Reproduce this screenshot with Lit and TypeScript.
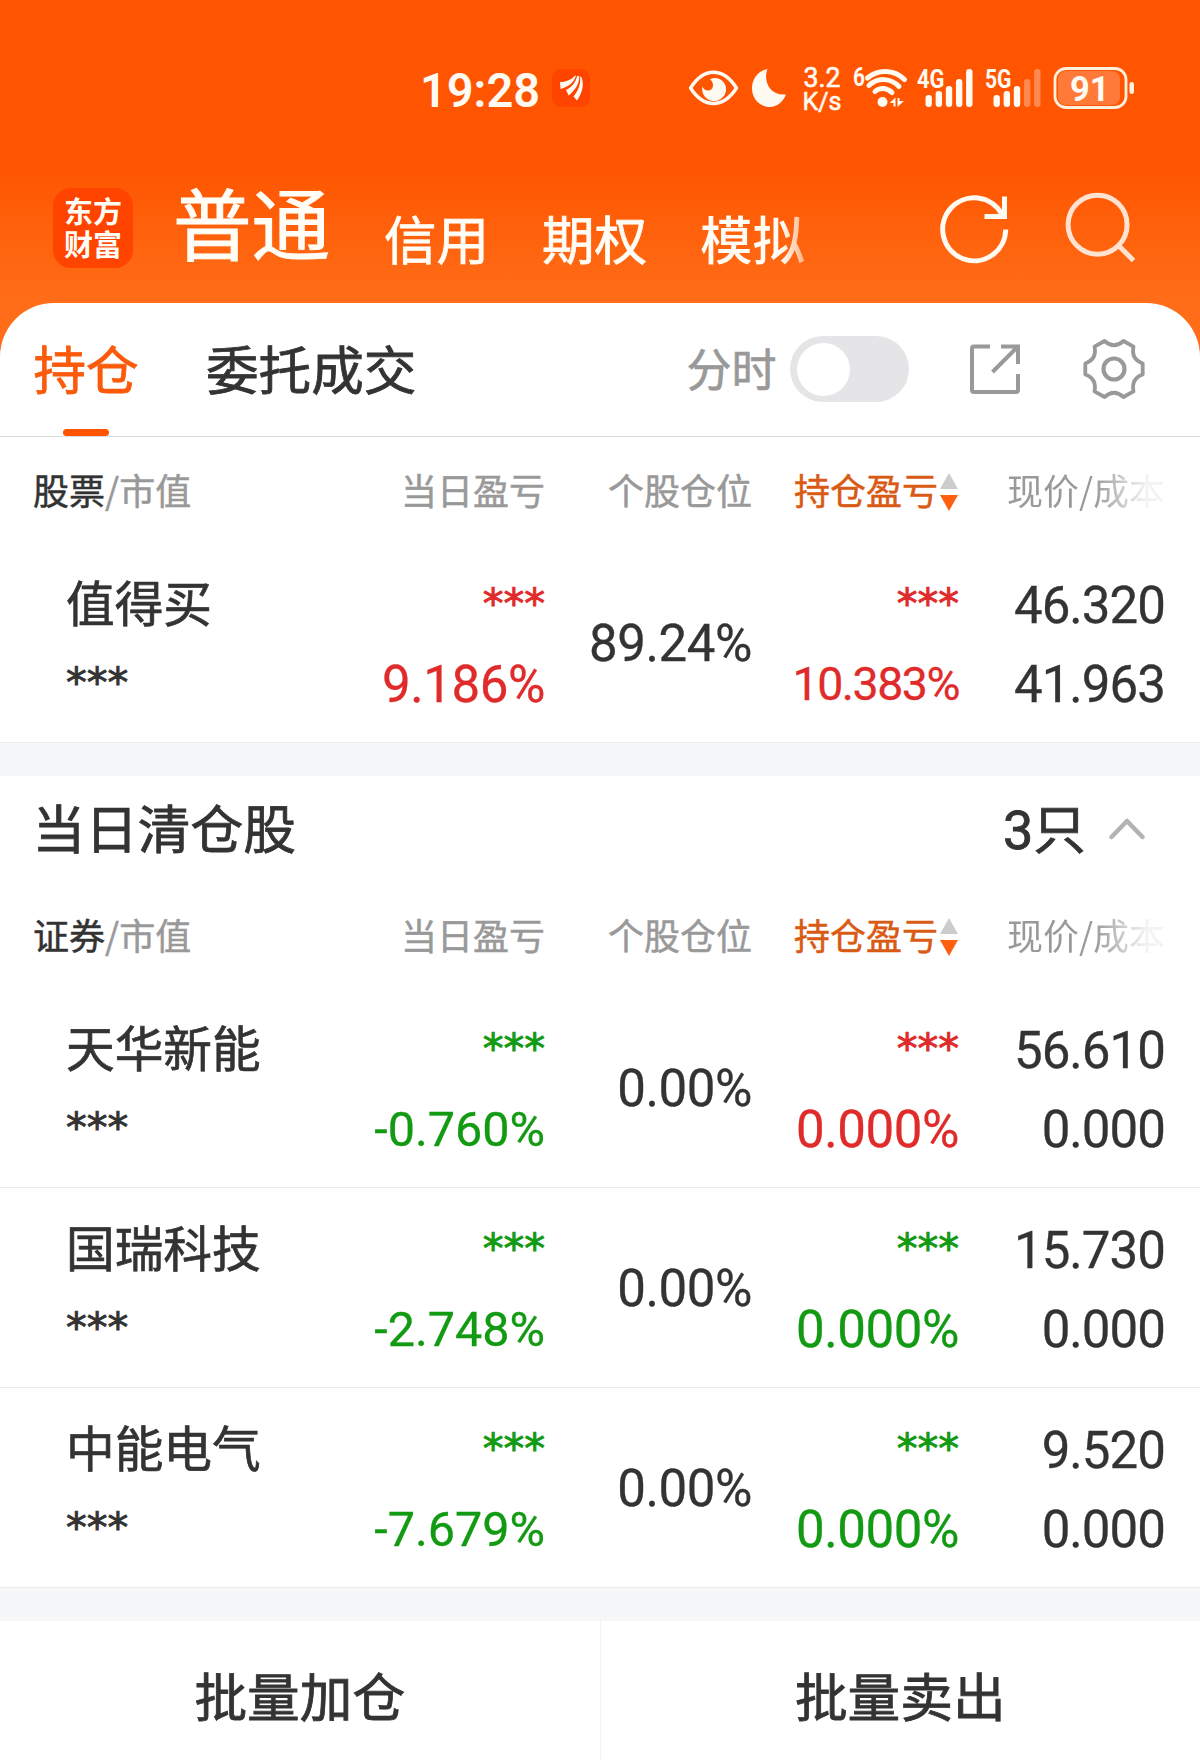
import { LitElement, html, css, svg } from "lit";
import { customElement, property } from "lit/decorators.js";
import { classMap } from "lit/directives/class-map.js";

type Tone = "up" | "down";

interface Holding {
  name: string;
  dayTone: Tone;
  dayPct: string;
  position: string;
  pnlTone: Tone;
  pnlPct: string;
  price: string;
  cost: string;
}

const MASK = "***";

const HELD: Holding[] = [
  { name: "值得买", dayTone: "up", dayPct: "9.186%", position: "89.24%", pnlTone: "up", pnlPct: "10.383%", price: "46.320", cost: "41.963" },
];

const CLEARED: Holding[] = [
  { name: "天华新能", dayTone: "down", dayPct: "-0.760%", position: "0.00%", pnlTone: "up", pnlPct: "0.000%", price: "56.610", cost: "0.000" },
  { name: "国瑞科技", dayTone: "down", dayPct: "-2.748%", position: "0.00%", pnlTone: "down", pnlPct: "0.000%", price: "15.730", cost: "0.000" },
  { name: "中能电气", dayTone: "down", dayPct: "-7.679%", position: "0.00%", pnlTone: "down", pnlPct: "0.000%", price: "9.520", cost: "0.000" },
];

@customElement("status-bar")
class StatusBar extends LitElement {
  static styles = css`
    :host { display: block; height: 160px; color: #fffaf2; font-family: Roboto, sans-serif; }
    svg { display: block; }
    .num { font-family: Roboto, sans-serif; fill: #fffaf2; }
  `;

  private bars(x: number, dim: number) {
    const tops = [95, 91, 86, 79, 69];
    return tops.map(
      (t, i) => svg`<rect x=${x + i * 10.15} y=${t} width="6.4" height=${107 - t} rx="3" fill="#fffaf2" opacity=${i >= 5 - dim ? 0.32 : 1}></rect>`
    );
  }

  render() {
    return html`
      <svg width="1200" height="160" viewBox="0 0 1200 160">
        <text class="num" x="420" y="106.500" font-size="48.500" font-weight="600" textLength="120" lengthAdjust="spacingAndGlyphs">19:28</text>

        <rect x="552" y="69" width="38" height="38" rx="9" fill="#ff4400"></rect>
        <g fill="#fffaf2">
          <path d="M560 82c5 0 11-2 14.500-6l1.500-.5c-2 7-7 11-15.500 13.500z"></path>
          <path d="M566 90c6-3 10-8 11-14l2.200 0c.3 8-4 14-10.500 19.500z"></path>
          <path d="M573.500 96.500c5-6 7.500-13 6.500-20l1.500.8c3 8 .5 16-4.500 23.200z"></path>
        </g>

        <path d="M690.500 88C697 78 705 72.300 713.500 72.300S730 78 736.500 88C730 98 722 103.500 713.500 103.500S697 98 690.500 88z"
          fill="none" stroke="#fffaf2" stroke-width="3.400" stroke-linejoin="round"></path>
        <path d="M710 79.200A12 12 0 0 1 723.500 82A11.500 11.500 0 0 1 722 98C716 104 704 101 702.300 91C702 89.500 702 88 702.400 86.500C704 91 709.500 92 712 88.500C714 85.500 713 81.500 710 79.200z" fill="#fffaf2"></path>
        <path d="M767.500 69C763 80 769 96 786 94.500C783 102 777 107 770 107C759.500 107 752 98.500 752 88.500C752 78 758.500 70.500 767.500 69z" fill="#fffaf2"></path>

        <text class="num" x="803.500" y="86.500" font-size="27" textLength="37" lengthAdjust="spacingAndGlyphs" stroke="#fffaf2" stroke-width=".6">3.2</text>
        <text class="num" x="802.500" y="109.500" font-size="26.500" textLength="39" lengthAdjust="spacingAndGlyphs" stroke="#fffaf2" stroke-width=".6">K/s</text>
        <text class="num" x="853" y="86" font-size="25" font-weight="700" textLength="12" lengthAdjust="spacingAndGlyphs">6</text>

        <g fill="none" stroke="#fffaf2" stroke-width="5" stroke-linecap="round">
          <path d="M867.500 78C878 69 894 69 904.500 79.500"></path>
          <path d="M869 85.500C878 77 891 78 899 86.500"></path>
          <path d="M875 91.500C880 87 887 87.500 892 92.500"></path>
        </g>
        <circle cx="882.500" cy="102" r="5" fill="#fffaf2"></circle>
        <path d="M889.500 103l6-5.500v9h-2v-3.500zM897.500 98h2v3h4.500l-6.500 6z" fill="#fffaf2"></path>

        <text class="num" x="917" y="87.500" font-size="25.500" font-weight="700" textLength="27.500" lengthAdjust="spacingAndGlyphs">4G</text>
        ${this.bars(925.5, 0)}
        <text class="num" x="985" y="87.500" font-size="25.500" font-weight="700" textLength="26.500" lengthAdjust="spacingAndGlyphs">5G</text>
        ${this.bars(993.5, 2)}

        <rect x="1058" y="71" width="62" height="34" rx="8" fill="#ff7a38"></rect>
        <rect x="1055" y="68.500" width="71" height="39" rx="11" fill="none" stroke="#fff0de" stroke-width="2.800"></rect>
        <rect x="1129.500" y="82" width="4.500" height="12" rx="2.200" fill="#fff0de"></rect>
        <text class="num" x="1070" y="101" font-size="35" font-weight="700" textLength="39.500" lengthAdjust="spacingAndGlyphs">91</text>
      </svg>
    `;
  }
}

@customElement("account-nav")
class AccountNav extends LitElement {
  static styles = css`
    :host { display: block; height: 143px; font-family: "Noto Sans CJK SC", sans-serif; color: #fffdf6; }
    .nav { display: flex; align-items: flex-start; padding: 28px 0 0 53px; }
    .logo {
      width: 80px; height: 74px; padding-top: 6px; border-radius: 18px; background: #ff4400;
      font-size: 29px; line-height: 32.500px; font-weight: 700; text-align: center;
    }
    .accounts { display: flex; width: 701px; margin-left: 40px; margin-top: -7px; line-height: 80px; white-space: nowrap; }
    .main { font-size: 78.500px; width: 211px; -webkit-text-stroke: 1px currentColor; }
    .item { font-size: 52.500px; width: 158px; padding-top: 15.500px; -webkit-text-stroke: 0.800px currentColor; }
    .fade { width: 105px; -webkit-text-stroke: 0; font-weight: 500;
      background: linear-gradient(to right, #fffdf6 78%, rgba(255, 253, 246, 0.500) 100%);
      -webkit-background-clip: text; background-clip: text; color: transparent;
    }
    .tools { display: flex; gap: 50px; margin-left: 62px; padding-top: 2px; }
    svg { display: block; overflow: visible; }
  `;

  render() {
    return html`
      <div class="nav">
        <div class="logo">东方<br />财富</div>
        <div class="accounts">
          <span class="main">普通</span>
          <span class="item">信用</span>
          <span class="item">期权</span>
          <span class="item fade">模拟</span>
        </div>
        <div class="tools">
          <svg width="76" height="76" viewBox="936 190 76 76" fill="none" stroke="#fffaf2" stroke-width="5">
            <path d="M1005.700 229.500A31.500 31.500 0 1 1 1002 214.500"></path>
            <path d="M1004.500 196.500V216.500H984.500"></path>
          </svg>
          <svg width="76" height="76" viewBox="1062 190 76 76" fill="none" stroke="#ffe3d0" stroke-width="5">
            <circle cx="1097.600" cy="224.700" r="29.500"></circle>
            <path d="M1119 246L1133.500 260.500"></path>
          </svg>
        </div>
      </div>
    `;
  }
}

@customElement("sheet-tabs")
class SheetTabs extends LitElement {
  static styles = css`
    :host { display: block; font-family: "Noto Sans CJK SC", sans-serif; }
    .bar { display: flex; height: 133px; border-bottom: 1px solid #dcdcdc; box-sizing: content-box; }
    .tab { font-size: 52.600px; line-height: 129px; height: 133px; color: #333; white-space: nowrap; -webkit-text-stroke: 0.800px currentColor; }
    .active { margin-left: 33px; width: 106px; color: #fb5a0a; display: flex; flex-direction: column; align-items: center; }
    .mark { width: 46px; height: 7px; border-radius: 4px; background: #ff5500; margin-top: -3px; }
    .orders { margin-left: 67px; }
    .minute { margin-left: 270px; font-size: 45px; line-height: 130px; color: #999; width: 90px; white-space: nowrap; -webkit-text-stroke: 0.700px currentColor; }
    .switch { width: 105px; height: 52px; padding: 7px; margin: 33px 0 0 14px; border-radius: 33px; background: #e5e5e7; }
    .knob { width: 53px; height: 53px; border-radius: 50%; background: #fff; }
    .icon { display: block; overflow: visible; }
    .export { margin: 41px 0 0 61px; }
    .gear { margin: 36px 0 0 64px; }
  `;

  render() {
    return html`
      <div class="bar">
        <div class="tab active"><span>持仓</span><i class="mark"></i></div>
        <div class="tab orders">委托成交</div>
        <div class="minute">分时</div>
        <div class="switch"><div class="knob"></div></div>
        <svg class="icon export" width="50" height="50" viewBox="970 344 50 50" fill="none" stroke="#999" stroke-width="4" stroke-linejoin="round">
          <path d="M990 346.500H974Q972 346.500 972 348.500V390Q972 392 974 392H1016Q1018 392 1018 390V374"></path>
          <path stroke-linejoin="miter" d="M1001 346.500H1018V364M1017 347.500L992.500 372"></path>
        </svg>
        <svg class="icon gear" width="60" height="60" viewBox="-30 -30 60 60" fill="none" stroke="#999">
          <path stroke-width="3.800" stroke-linejoin="round"
            d="M-9.500 -28Q0 -19.500 9.500 -28L19.500 -22.300Q16.900 -9.750 28.700 -5.500V5.500Q16.900 9.750 19.500 22.300L9.500 28Q0 19.500 -9.500 28L-19.500 22.300Q-16.900 9.750 -28.700 5.500V-5.500Q-16.900 -9.750 -19.500 -22.300Z"></path>
          <circle r="10.500" stroke-width="4.200"></circle>
        </svg>
      </div>
    `;
  }
}

@customElement("column-head")
class ColumnHead extends LitElement {
  @property() kind = "";

  static styles = css`
    :host { display: block; font-family: "Noto Sans CJK SC", sans-serif; }
    .head {
      display: grid; grid-template-columns: 300px 212px 207px 207px 206px; height: 106px; padding: 0 35px 0 33px;
      font-size: 36px; line-height: 105px; color: #999; white-space: nowrap; text-align: right;
      -webkit-text-stroke: 0.500px currentColor;
    }
    .first { text-align: left; }
    .kind { color: #333; }
    .sort { display: flex; justify-content: flex-end; align-items: flex-start; color: #d95a14; gap: 2px; margin-right: 1px; }
    .arrows { display: block; margin-top: 36px; }
    .fade {
      background: linear-gradient(to right, #999 55%, rgba(153, 153, 153, 0.120) 88%);
      -webkit-background-clip: text; background-clip: text; color: transparent; -webkit-text-stroke: 0;
    }
  `;

  render() {
    return html`
      <div class="head">
        <div class="first"><span class="kind">${this.kind}</span>/市值</div>
        <div>当日盈亏</div>
        <div>个股仓位</div>
        <div class="sort">
          <span>持仓盈亏</span>
          <svg class="arrows" width="18" height="38" viewBox="0 0 18 38">
            <path d="M9 0L18 16H0z" fill="#ccc"></path>
            <path d="M0 22H18L9 38z" fill="#ff6010"></path>
          </svg>
        </div>
        <div><span class="fade">现价/成本</span></div>
      </div>
    `;
  }
}

@customElement("holding-row")
class HoldingRow extends LitElement {
  @property({ attribute: false }) item!: Holding;

  static styles = css`
    :host { display: block; border-bottom: 1px solid #ebebeb; height: 199px; color: #333; }
    .row {
      display: grid; grid-template-columns: 268px 211px 207px 207px 206px; padding: 0 35px 0 66px;
      font-family: Roboto, sans-serif; font-size: 51px; letter-spacing: -0.400px; text-align: right; white-space: nowrap;
      -webkit-text-stroke: 0.300px currentColor;
    }
    .cell { padding-top: 22.500px; line-height: 79px; }
    .left { text-align: left; }
    .name {
      font-family: "Noto Sans CJK SC", sans-serif; font-size: 48.700px; letter-spacing: 0; height: 79px;
      margin-top: -3.500px; margin-bottom: 3.500px; -webkit-text-stroke: 0.700px currentColor;
    }
    .mask { font-family: "DejaVu Sans", sans-serif; font-size: 41.500px; letter-spacing: 0; height: 79px; margin-top: -2px; margin-bottom: 2px; -webkit-text-stroke: 0.900px currentColor; }
    .mid { line-height: 202px; }
    .long { font-size: 46.500px; letter-spacing: -1.500px; }
    .signed { font-size: 48.500px; letter-spacing: 0; }
    .quote { letter-spacing: -0.950px; }
    .up { color: #e02b2b; }
    .down { color: #129a12; }
  `;

  render() {
    const d = this.item;
    return html`
      <div class="row">
        <div class="cell left">
          <div class="name">${d.name}</div>
          <div class="mask">${MASK}</div>
        </div>
        <div class="cell ${d.dayTone}">
          <div class="mask">${MASK}</div>
          <div class=${classMap({ signed: d.dayPct.startsWith("-") })}>${d.dayPct}</div>
        </div>
        <div class="mid">${d.position}</div>
        <div class="cell ${d.pnlTone}">
          <div class="mask">${MASK}</div>
          <div class=${classMap({ long: d.pnlPct.length > 6 })}>${d.pnlPct}</div>
        </div>
        <div class="cell quote">
          <div>${d.price}</div>
          <div>${d.cost}</div>
        </div>
      </div>
    `;
  }
}

@customElement("app-root")
class AppRoot extends LitElement {
  static styles = css`
    :host {
      display: block; width: 1200px; height: 1760px; overflow: hidden;
      font-family: "Noto Sans CJK SC", sans-serif; color: #333;
      background: linear-gradient(to bottom, #ff5500 0, #ff5500 165px, #ff6d18 300px, #ff6d18 360px, #fff 360px);
    }
    .sheet { background: #fff; border-radius: 54px 54px 0 0; }
    .gap { height: 33px; background: #f6f7f9; }
    .title { display: flex; height: 106px; padding: 0 55px 0 32.500px; font-size: 52.700px; line-height: 101px; -webkit-text-stroke: 0.800px currentColor; }
    .title-text { flex: 1; }
    .count { display: flex; }
    .digit { font-family: Roboto, sans-serif; font-size: 54px; line-height: 110px; }
    .chevron { display: block; margin: 42px 0 0 23px; }
    .actions { display: flex; height: 139px; overflow: hidden; }
    .action { flex: 1 1 0; text-align: center; font-size: 52.700px; line-height: 146px; -webkit-text-stroke: 0.800px currentColor; }
    .action:first-child { border-right: 1px solid #f1f2f3; }
  `;

  render() {
    return html`
      <status-bar></status-bar>
      <account-nav></account-nav>
      <div class="sheet">
        <sheet-tabs></sheet-tabs>
        <column-head kind="股票"></column-head>
        ${HELD.map((h) => html`<holding-row .item=${h}></holding-row>`)}
        <div class="gap"></div>
        <div class="title">
          <div class="title-text">当日清仓股</div>
          <div class="count"><span class="digit">3</span>只</div>
          <svg class="chevron" width="36" height="22" viewBox="0 0 36 22" fill="none" stroke="#b3b3b3" stroke-width="4.500" stroke-linecap="round" stroke-linejoin="round">
            <path d="M2.500 19L18 3L33.500 19"></path>
          </svg>
        </div>
        <column-head kind="证券"></column-head>
        ${CLEARED.map((h) => html`<holding-row .item=${h}></holding-row>`)}
        <div class="gap"></div>
        <div class="actions">
          <div class="action">批量加仓</div>
          <div class="action">批量卖出</div>
        </div>
      </div>
    `;
  }
}
